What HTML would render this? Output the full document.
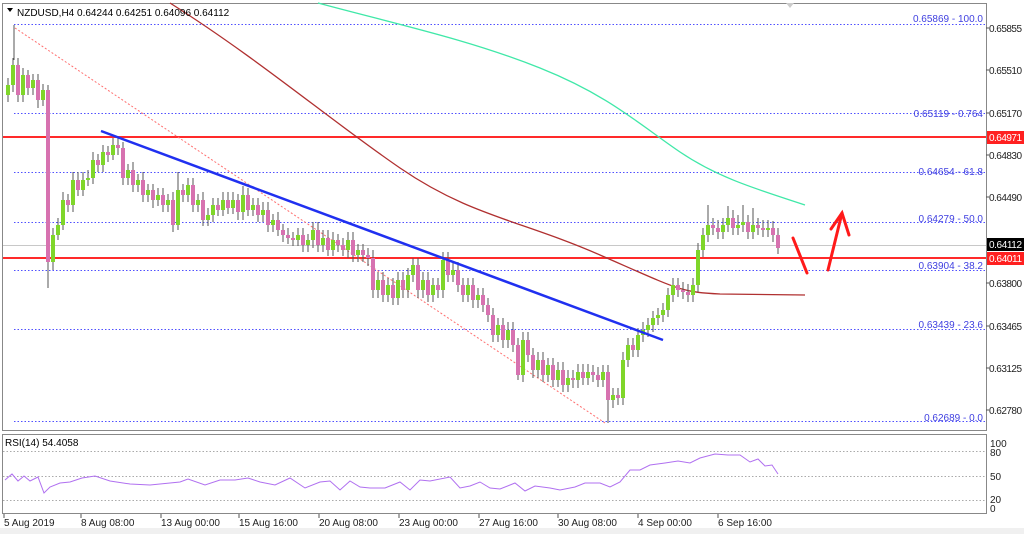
<!DOCTYPE html>
<html><head><meta charset="utf-8"><style>
body{margin:0;width:1024px;height:534px;background:#fff;overflow:hidden;font-family:"Liberation Sans",sans-serif}
svg{display:block}
text{font-family:"Liberation Sans",sans-serif;font-size:10px}
</style></head><body>
<svg width="1024" height="534" xmlns="http://www.w3.org/2000/svg">
<rect x="0" y="0" width="1024" height="534" fill="#fff"/>
<rect x="0" y="528" width="1024" height="6" fill="#f0f0f0"/>
<rect x="2.5" y="3.5" width="984" height="427" fill="none" stroke="#888"/>
<rect x="2.5" y="434.5" width="984" height="79" fill="none" stroke="#888"/>
<g stroke="#5050ff" stroke-dasharray="1.5,2" stroke-width="1">
<line x1="14" y1="24.5" x2="986" y2="24.5"/>
<line x1="14" y1="113.5" x2="986" y2="113.5"/>
<line x1="14" y1="172.5" x2="986" y2="172.5"/>
<line x1="14" y1="222.5" x2="986" y2="222.5"/>
<line x1="14" y1="270.5" x2="986" y2="270.5"/>
<line x1="14" y1="329.5" x2="986" y2="329.5"/>
<line x1="14" y1="421.5" x2="986" y2="421.5"/>
</g>
<line x1="3" y1="245.5" x2="986" y2="245.5" stroke="#c8c8c8"/>
<line x1="3" y1="137" x2="986" y2="137" stroke="#ff2a2a" stroke-width="2"/>
<line x1="3" y1="258" x2="986" y2="258" stroke="#ff2a2a" stroke-width="2"/>
<line x1="15" y1="28" x2="605" y2="423" stroke="#ff7070" stroke-dasharray="2,2"/>
<path fill="none" stroke="#b03030" stroke-width="1.3" d="M170,3 C260,60 330,120 400,168 S520,220 600,255 S680,292 720,294 L805,295"/>
<path fill="none" stroke="#40e8a8" stroke-width="1.3" d="M318,3 C400,25 470,40 540,68 S640,125 680,152 S760,190 805,205"/>
<path fill="none" stroke="#555" stroke-width="1" d="M8 78V102M13 58V92M14 25V60M18 58V102M23 68V102M28 70V95M33 74V95M38 74V108M43 84V106M48 85V288M53 228V270M58 218V240M63 192V230M68 194V212M73 172V212M78 172V196M83 172V196M88 170V186M93 152V184M98 154V172M103 145V172M108 146V162M113 138V160M118 138V155M123 142V185M128 164V185M133 162V192M138 174V192M143 172V202M148 184V202M153 184V208M158 188V206M163 188V212M168 194V212M173 192V232M178 172V230M183 184V202M188 178V202M193 178V212M198 194V212M203 192V226M208 208V226M213 198V222M218 198V216M223 192V216M228 192V214M233 192V214M238 194V220M243 186V220M248 188V216M253 198V216M258 198V222M263 202V222M268 202V232M273 214V232M278 212V236M283 224V242M288 228V244M293 232V246M298 228V246M303 228V252M308 234V252M313 222V248M318 222V252M323 230V252M328 230V256M333 232V256M338 234V252M343 238V256M348 232V258M353 232V262M358 244V262M363 244V262M368 248V266M373 250V298M378 272V298M383 272V302M388 278V302M393 278V305M398 272V305M403 272V298M408 268V298M413 258V282M418 258V298M423 272V298M428 272V302M433 278V302M438 278V298M443 252V298M448 252V282M453 262V282M458 262V292M463 278V302M468 278V302M473 278V308M478 288V308M483 288V312M488 298V322M493 308V342M498 318V342M503 318V348M508 322V348M513 322V352M518 338V380M523 332V382M528 332V362M533 348V378M538 352V378M543 352V382M548 358V382M553 358V387M558 362V387M563 362V392M568 370V392M573 370V388M578 364V388M583 364V385M588 364V385M593 365V382M598 367V387M603 365V387M608 365V423M613 388V408M618 388V405M623 352V405M628 338V367M633 338V357M638 328V357M643 322V342M648 318V337M653 311V332M658 308V325M663 303V322M668 288V317M673 278V302M678 278V297M683 282V299M688 284V302M693 278V302M698 243V292M703 228V257M708 205V242M713 218V235M718 220V239M723 218V239M728 206V232M733 210V235M738 215V235M743 205V232M748 215V239M753 208V239M758 218V235M763 220V237M768 220V237M773 221V242M778 228V254"/>
<path fill="none" stroke="#7fd62a" stroke-width="4" d="M8 85V95M13 65V85M23 75V95M33 80V88M43 90V100M53 235V262M58 225V235M63 200V225M73 180V205M83 180V190M88 178V180M93 160V178M103 152V165M113 145V155M128 170V178M138 180V185M148 190V195M158 195V200M168 200V205M178 190V225M188 185V195M198 200V205M208 215V220M213 205V215M223 200V210M233 200V208M243 195V212M253 205V210M263 210V215M273 220V225M298 235V240M308 240V245M313 230V240M323 238V245M333 240V250M348 240V250M358 250V255M378 280V290M388 285V295M398 280V298M408 275V290M413 265V275M423 280V290M433 285V295M443 260V290M453 270V275M468 285V295M478 295V300M498 325V335M508 330V340M523 340V375M538 360V370M548 365V375M558 370V380M568 378V385M578 372V380M588 372V378M603 372V380M613 395V400M623 360V398M628 345V360M638 335V350M643 330V335M648 325V330M653 318V325M658 315V318M663 310V315M668 295V310M673 285V295M693 285V295M698 250V285M703 235V250M708 225V235M723 225V232M728 218V225M738 225V228M743 222V225M753 225V232M768 228V230"/>
<path fill="none" stroke="#d772b0" stroke-width="4" d="M18 65V95M28 75V88M38 80V100M48 90V262M68 200V205M78 180V190M98 160V165M108 152V155M118 145V148M123 148V178M133 170V185M143 180V195M153 190V200M163 195V205M173 200V225M183 190V195M193 185V205M203 200V220M218 205V210M228 200V208M238 200V212M248 195V210M258 205V215M268 210V225M278 220V230M283 230V235M288 235V238M293 238V240M303 235V245M318 230V245M328 238V250M338 240V245M343 245V250M353 240V255M363 250V255M368 255V258M373 258V290M383 280V295M393 285V298M403 280V290M418 265V290M428 280V295M438 285V290M448 260V275M458 270V285M463 285V295M473 285V300M483 295V305M488 305V315M493 315V335M503 325V340M513 330V345M518 345V375M528 340V355M533 355V370M543 360V375M553 365V380M563 370V385M573 378V380M583 372V378M593 372V375M598 375V380M608 372V400M618 395V398M633 345V350M678 285V290M683 290V292M688 292V295M713 225V228M718 228V232M733 218V228M748 222V232M758 225V228M763 228V230M773 228V235M778 235V248"/>
<line x1="101" y1="131" x2="663" y2="340" stroke="#2030f0" stroke-width="2.5"/>
<g stroke="#ff1a1a" stroke-width="3" fill="none" stroke-linecap="round">
<line x1="793" y1="238" x2="807" y2="273"/>
<polyline points="828,270 842,213"/><polyline points="831,229 842,213 849,235"/>
</g>
<path d="M7 8 L13 8 L10 12 Z" fill="#000"/>
<text x="17" y="16" font-size="10.5">NZDUSD,H4  0.64244 0.64251 0.64096 0.64112</text>
<path d="M786 3 L794 3 L790 8Z" fill="#ccc"/>
<g fill="#4040e0" text-anchor="end" font-size="10">
<text x="983" y="22">0.65869 - 100.0</text>
<text x="983" y="117">0.65119 - 0.764</text>
<text x="983" y="175">0.64654 -  61.8</text>
<text x="983" y="222">0.64279 - 50.0</text>
<text x="983" y="269">0.63904 - 38.2</text>
<text x="983" y="328">0.63439 - 23.6</text>
<text x="983" y="421">0.62689 - 0.0</text>
</g>
<g fill="#222" font-size="9.5">
<text x="989" y="32" textLength="33">0.65855</text><text x="989" y="74" textLength="33">0.65510</text><text x="989" y="117" textLength="33">0.65170</text>
<text x="989" y="159" textLength="33">0.64830</text><text x="989" y="201" textLength="33">0.64490</text>
<text x="989" y="287" textLength="33">0.63800</text><text x="989" y="330" textLength="33">0.63465</text><text x="989" y="372" textLength="33">0.63125</text><text x="989" y="414" textLength="33">0.62780</text>
</g>
<g stroke="#555"><line x1="986" y1="28" x2="989" y2="28"/><line x1="986" y1="70" x2="989" y2="70"/><line x1="986" y1="113" x2="989" y2="113"/><line x1="986" y1="155" x2="989" y2="155"/><line x1="986" y1="197" x2="989" y2="197"/><line x1="986" y1="283" x2="989" y2="283"/><line x1="986" y1="326" x2="989" y2="326"/><line x1="986" y1="368" x2="989" y2="368"/><line x1="986" y1="410" x2="989" y2="410"/></g>
<rect x="987" y="131" width="37" height="13" fill="#ff2020"/><text x="989" y="141" fill="#fff" font-size="9.5" textLength="33">0.64971</text>
<rect x="987" y="238" width="37" height="13" fill="#000"/><text x="989" y="248" fill="#fff" font-size="9.5" textLength="33">0.64112</text>
<rect x="987" y="252" width="37" height="13" fill="#ff2020"/><text x="989" y="262" fill="#fff" font-size="9.5" textLength="33">0.64011</text>
<g stroke="#aaa" stroke-dasharray="1.5,2"><line x1="3" y1="451.5" x2="986" y2="451.5"/><line x1="3" y1="476.5" x2="986" y2="476.5"/><line x1="3" y1="500.5" x2="986" y2="500.5"/></g>
<text x="5" y="446" font-size="9.5">RSI(14) 54.4058</text>
<g font-size="9.5" fill="#222"><text x="990" y="447">100</text><text x="990" y="456">80</text><text x="990" y="480">50</text><text x="990" y="503">20</text><text x="990" y="512">0</text></g>
<polyline fill="none" stroke="#b070f0" stroke-width="1" points="5,480 12,474 18,481 24,476 30,481 38,477 44,493 50,487 60,483 70,482 82,478 95,476 110,481 130,484 150,485 170,483 180,482 188,479 205,485 220,480 235,480 248,478 260,482 275,485 290,478 305,488 320,482 330,481 340,490 350,481 360,487 370,488 385,488 400,482 410,490 420,480 430,481 450,477 460,488 470,486 480,482 490,488 500,489 515,483 525,491 535,486 550,488 560,490 575,487 585,483 600,483 610,487 620,482 630,470 640,470 650,465 665,463 678,461 690,463 700,458 715,454 728,455 740,455 750,462 758,459 765,466 772,465 778,474"/>
<g font-size="9.5" fill="#222">
<text x="4" y="526">5 Aug 2019</text><text x="81" y="526">8 Aug 08:00</text><text x="161" y="526">13 Aug 00:00</text>
<text x="239" y="526">15 Aug 16:00</text><text x="319" y="526">20 Aug 08:00</text><text x="399" y="526">23 Aug 00:00</text>
<text x="479" y="526">27 Aug 16:00</text><text x="558" y="526">30 Aug 08:00</text><text x="638" y="526">4 Sep 00:00</text>
<text x="718" y="526">6 Sep 16:00</text>
</g>
<g stroke="#555"><line x1="4" y1="514" x2="4" y2="518"/><line x1="81" y1="514" x2="81" y2="518"/><line x1="161" y1="514" x2="161" y2="518"/><line x1="239" y1="514" x2="239" y2="518"/><line x1="319" y1="514" x2="319" y2="518"/><line x1="399" y1="514" x2="399" y2="518"/><line x1="479" y1="514" x2="479" y2="518"/><line x1="558" y1="514" x2="558" y2="518"/><line x1="638" y1="514" x2="638" y2="518"/><line x1="718" y1="514" x2="718" y2="518"/></g>
</svg>
</body></html>
